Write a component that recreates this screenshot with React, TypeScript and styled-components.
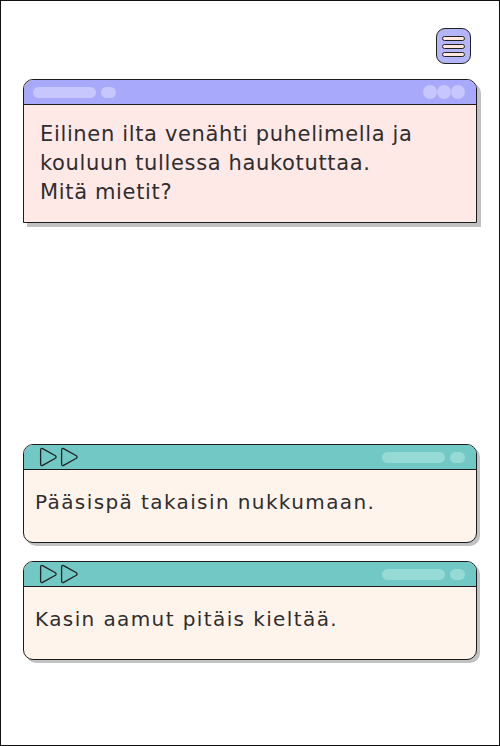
import React from "react";
import styled, { createGlobalStyle } from "styled-components";

const GlobalStyle = createGlobalStyle`
  html, body { margin: 0; padding: 0; background: #fff; }
  body { font-family: "DejaVu Sans", "Open Sans", sans-serif; }
`;

const Page = styled.div`
  width: 500px;
  height: 746px;
  box-sizing: border-box;
  border: 1px solid #111;
  display: flex;
  flex-direction: column;
  background: #fff;
`;

const TopBar = styled.div`
  display: flex;
  justify-content: flex-end;
  padding: 27px 28px 0 0;
`;

const MenuButton = styled.button`
  width: 35px;
  height: 36px;
  box-sizing: border-box;
  padding: 0;
  border: 1px solid #222;
  border-radius: 9px;
  background: #b4b4f8;
  display: flex;
  flex-direction: column;
  align-items: center;
  justify-content: center;
  gap: 3px;
  cursor: pointer;
`;

const MenuLine = styled.span`
  display: block;
  width: 23px;
  height: 5px;
  box-sizing: border-box;
  border: 1px solid #222;
  border-radius: 3px;
  background: #ffe6de;
`;

const Card = styled.div<{ $rounded: boolean; $bg: string; $shadow: number }>`
  margin: 0 22px;
  border: 1px solid #1c1c1c;
  border-radius: ${(p) => (p.$rounded ? "10px" : "10px 10px 0 0")};
  background: ${(p) => p.$bg};
  box-shadow: ${(p) => `${p.$shadow}px ${p.$shadow}px 0 #c2c2c2`};
  overflow: hidden;
`;

const PromptCard = styled(Card)`
  margin-top: 15px;
`;

const ChoiceList = styled.div`
  margin-top: 221px;
  display: flex;
  flex-direction: column;
  gap: 18px;
`;

const Header = styled.div<{ $color: string }>`
  height: 24px;
  background: ${(p) => p.$color};
  border-bottom: 1px solid #1c1c1c;
  display: flex;
  align-items: center;
  justify-content: space-between;
  padding: 0 11px 0 9px;
`;

const PillGroup = styled.div`
  display: flex;
  align-items: center;
  gap: 5px;
`;

const Pill = styled.span<{ $w: number; $color: string }>`
  display: block;
  width: ${(p) => p.$w}px;
  height: 11px;
  border-radius: 6px;
  background: ${(p) => p.$color};
`;

const Dots = styled.div`
  display: flex;
  align-items: center;
`;

const Dot = styled.span`
  display: block;
  width: 14px;
  height: 14px;
  border-radius: 50%;
  background: #c7c7fd;
`;

const BodyText = styled.p`
  margin: 0;
  font-size: 20px;
  font-weight: 400;
  line-height: 29px;
  letter-spacing: 1.4px;
  color: #2e2e2e;
`;

const PromptText = styled(BodyText)`
  font-size: 21px;
  letter-spacing: 0.65px;
  padding: 15px 16px 15px 16px;
`;

const ChoiceText = styled(BodyText)`
  padding: 18px 11px 25px 11px;
`;

const Plays = styled.div`
  display: flex;
  align-items: center;
  gap: 2px;
  padding-left: 6px;
`;

const PlayIcon = () => (
  <svg width="19" height="20" viewBox="0 0 19 20" fill="none">
    <path
      d="M3.6 1.6 C2.6 1 1.6 1.5 1.6 2.7 V17.3 C1.6 18.5 2.6 19 3.6 18.4 L16.4 11.2 C17.3 10.6 17.3 9.4 16.4 8.8 Z"
      stroke="#222"
      strokeWidth="1.3"
      strokeLinejoin="round"
    />
  </svg>
);

const choices = ["Pääsispä takaisin nukkumaan.", "Kasin aamut pitäis kieltää."];

export default function App() {
  return (
    <>
      <GlobalStyle />
      <Page>
        <TopBar>
          <MenuButton aria-label="menu">
            <MenuLine />
            <MenuLine />
            <MenuLine />
          </MenuButton>
        </TopBar>
        <PromptCard $rounded={false} $bg="#ffe9e7" $shadow={4}>
          <Header $color="#a9a9fb">
            <PillGroup>
              <Pill $w={63} $color="#c7c7fd" />
              <Pill $w={15} $color="#c7c7fd" />
            </PillGroup>
            <Dots>
              <Dot />
              <Dot />
              <Dot />
            </Dots>
          </Header>
          <PromptText>
            Eilinen ilta venähti puhelimella ja
            <br />
            kouluun tullessa haukotuttaa.
            <br />
            Mitä mietit?
          </PromptText>
        </PromptCard>
        <ChoiceList>
          {choices.map((c) => (
            <Card key={c} $rounded $bg="#fff4ec" $shadow={3}>
              <Header $color="#72c8c4">
                <Plays>
                  <PlayIcon />
                  <PlayIcon />
                </Plays>
                <PillGroup>
                  <Pill $w={63} $color="#95dad5" />
                  <Pill $w={15} $color="#95dad5" />
                </PillGroup>
              </Header>
              <ChoiceText>{c}</ChoiceText>
            </Card>
          ))}
        </ChoiceList>
      </Page>
    </>
  );
}
